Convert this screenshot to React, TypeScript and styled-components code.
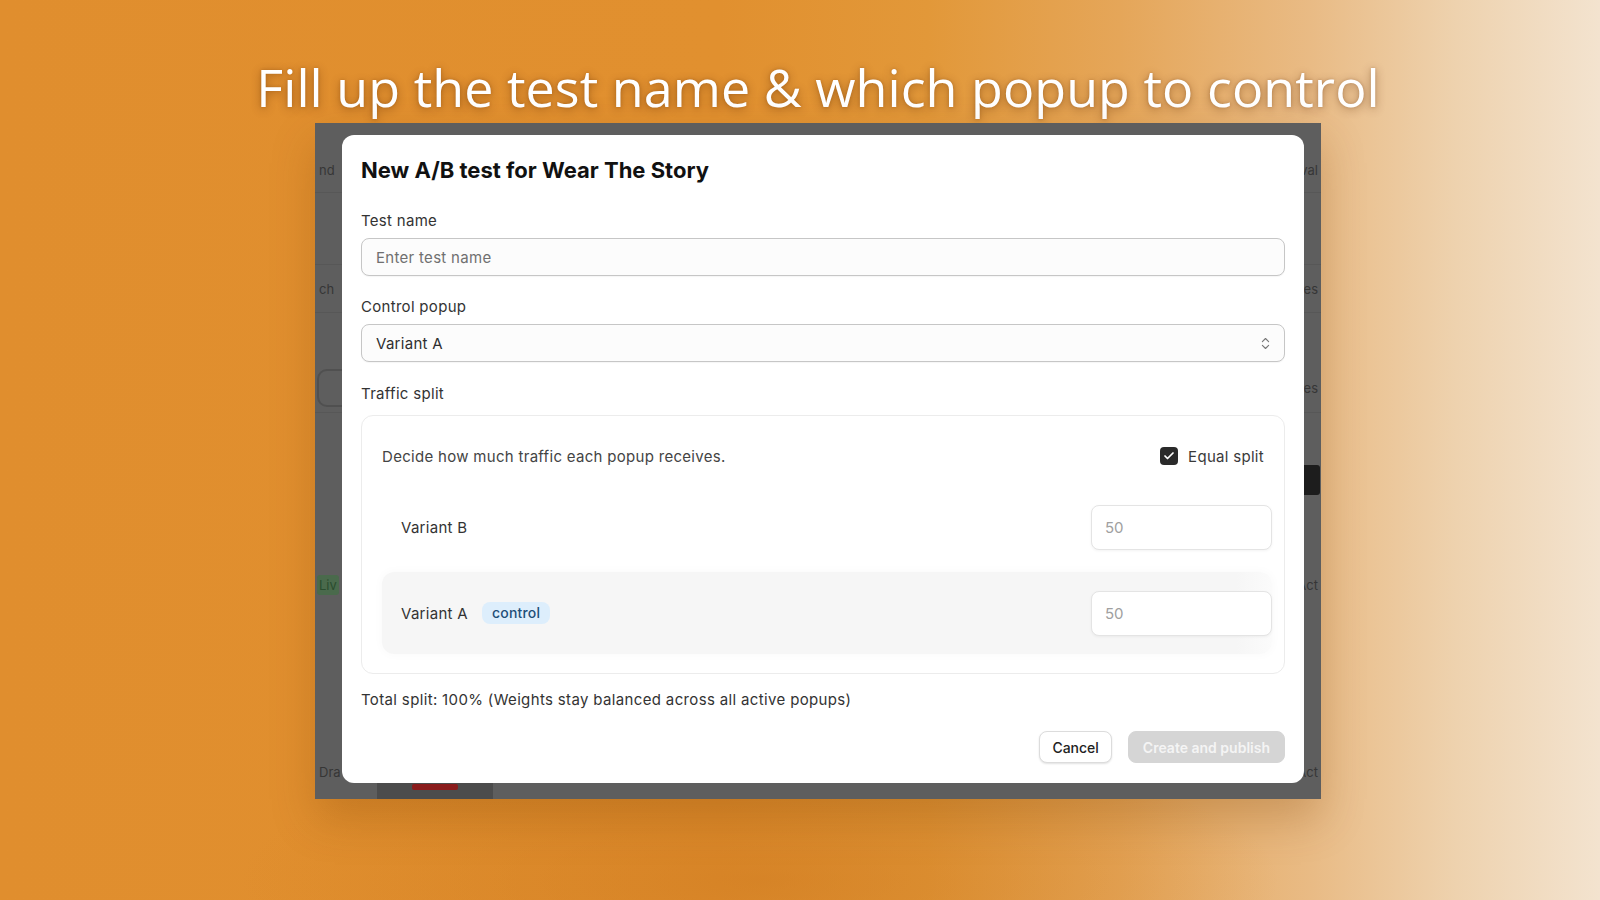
import styled, { createGlobalStyle } from 'styled-components';
import { Check, ChevronsUpDown } from 'lucide-react';

const GlobalStyle = createGlobalStyle`
  html, body {
    margin: 0;
    padding: 0;
  }
  body {
    width: 1600px;
    height: 900px;
    overflow: hidden;
    font-family: Inter, "Liberation Sans", sans-serif;
    background:
      radial-gradient(ellipse 520px 140px at 760px 880px, rgba(205, 120, 30, 0.55), rgba(205, 120, 30, 0) 100%),
      linear-gradient(90deg, #e08e2e 0%, #e1902f 45%, #e29839 58%, #e5a659 70%, #e9bb85 82%, #eed2ae 91%, #f3e3cf 100%);
  }
`;

const Stage = styled.div`
  width: 1600px;
  height: 900px;
  box-sizing: border-box;
  padding: 55px 0 0 36px;
  display: flex;
  flex-direction: column;
  align-items: center;
`;

const Headline = styled.h1`
  margin: 0;
  font-family: "Open Sans", sans-serif;
  font-weight: 400;
  font-size: 52px;
  line-height: 64px;
  letter-spacing: 0.05px;
  color: #ffffff;
  text-shadow: 0 2px 10px rgba(90, 40, 0, 0.45), 0 0 3px rgba(90, 40, 0, 0.25);
  white-space: nowrap;
`;

/* dimmed app screenshot behind the modal */
const Backdrop = styled.div`
  position: relative;
  margin-top: 4px;
  width: 1006px;
  height: 676px;
  background: #5e5e5e;
  overflow: hidden;
  box-shadow: 0 20px 40px rgba(120, 60, 0, 0.25);
`;

const AppTable = styled.div`
  display: flex;
  flex-direction: column;
  padding-top: 24px;
`;

const AppRow = styled.div<{ $h: number; $line?: boolean }>`
  height: ${(p) => p.$h}px;
  flex-shrink: 0;
  box-sizing: border-box;
  padding: 0 1px 0 2px;
  display: flex;
  align-items: center;
  justify-content: space-between;
  border-bottom: ${(p) => (p.$line ? '1px solid #575757' : 'none')};
  font-family: Inter, sans-serif;
  font-size: 13px;
  color: #363636;
`;

const AppCell = styled.span<{ $kind?: 'dark' | 'green' | 'pill' }>`
  min-width: 16px;
  line-height: 20px;
  padding: 0 2px;
  border-radius: ${(p) => (p.$kind === 'pill' ? '10px' : '3px')};
  background: ${(p) =>
    p.$kind === 'dark' ? '#1d1d1d' : p.$kind === 'green' ? '#4a6a4c' : 'transparent'};
  border: ${(p) => (p.$kind === 'pill' ? '2px solid #505050' : 'none')};
  color: ${(p) => (p.$kind === 'green' ? '#2b4d2f' : '#363636')};
  height: ${(p) => (p.$kind === 'dark' ? 30 : p.$kind === 'pill' ? 34 : 20)}px;
  width: ${(p) => (p.$kind === 'pill' ? '30px' : p.$kind === 'dark' ? '14px' : 'auto')};
`;

const BottomTab = styled.div`
  position: absolute;
  left: 62px;
  bottom: 0;
  width: 116px;
  height: 24px;
  box-sizing: border-box;
  padding-bottom: 9px;
  background: #4c4c4c;
  display: flex;
  justify-content: center;
  align-items: flex-end;
`;

const RedMark = styled.span`
  width: 46px;
  height: 6px;
  background: #8a1c1c;
  border-radius: 2px;
`;

const Modal = styled.div`
  position: absolute;
  left: 27px;
  top: 12px;
  width: 962px;
  height: 648px;
  box-sizing: border-box;
  padding: 21px 19px 21px 19px;
  background: #ffffff;
  border-radius: 12px;
  display: flex;
  flex-direction: column;
  font-family: Inter, "Liberation Sans", sans-serif;
  color: #303030;
`;

const Title = styled.h2`
  margin: 0;
  font-size: 22px;
  line-height: 28px;
  font-weight: 700;
  color: #111;
`;

const Field = styled.div<{ $mt: number }>`
  display: flex;
  flex-direction: column;
  gap: 7px;
  margin-top: ${(p) => p.$mt}px;
`;

const Label = styled.label`
  font-size: 15px;
  line-height: 20px;
  letter-spacing: 0.3px;
  color: #333;
`;

const TextBox = styled.div<{ $placeholder?: boolean }>`
  height: 38px;
  box-sizing: border-box;
  border: 1px solid #c6c6c6;
  border-radius: 8px;
  background: #fcfcfc;
  padding: 0 11px 0 14px;
  display: flex;
  align-items: center;
  justify-content: space-between;
  font-size: 15px;
  letter-spacing: 0.3px;
  color: ${(p) => (p.$placeholder ? '#707070' : '#2f2f2f')};
  box-shadow: 0 1px 1px rgba(0, 0, 0, 0.04);
`;

const SplitBox = styled.div`
  margin-top: 11px;
  border: 1px solid #ececec;
  border-radius: 12px;
  padding: 20px 12px 19px 20px;
  display: flex;
  flex-direction: column;
`;

const SplitHeader = styled.div`
  height: 40px;
  margin-right: 8px;
  display: flex;
  align-items: center;
  justify-content: space-between;
  font-size: 15px;
  letter-spacing: 0.3px;
  color: #444;
`;

const CheckLabel = styled.div`
  display: flex;
  align-items: center;
  gap: 10px;
  color: #3a3a3a;
`;

const CheckBox = styled.span`
  width: 18px;
  height: 18px;
  border-radius: 4px;
  background: #2a2a2a;
  display: flex;
  align-items: center;
  justify-content: center;
  color: #fff;
`;

const VariantList = styled.div`
  margin-top: 10px;
  display: flex;
  flex-direction: column;
  gap: 4px;
`;

const VariantRow = styled.div<{ $shaded?: boolean }>`
  height: 82px;
  box-sizing: border-box;
  padding: 0 0 0 19px;
  display: flex;
  align-items: center;
  justify-content: space-between;
  border-radius: 12px;
  background: ${(p) =>
    p.$shaded ? 'linear-gradient(90deg, #f6f6f6 0%, #f6f6f6 96%, #fbfbfb 100%)' : 'transparent'};
  box-shadow: ${(p) => (p.$shaded ? '0 0 8px 2px rgba(0,0,0,0.02)' : 'none')};
`;

const VariantName = styled.div`
  display: flex;
  align-items: center;
  gap: 14px;
  font-size: 15px;
  letter-spacing: 0.3px;
  color: #333;
`;

const Badge = styled.span`
  padding: 2px 10px;
  border-radius: 8px;
  background: #ddeefc;
  color: #1f4f78;
  font-size: 14px;
  font-weight: 500;
  letter-spacing: 0.2px;
  line-height: 18px;
`;

const WeightInput = styled.div`
  width: 181px;
  height: 45px;
  box-sizing: border-box;
  border: 1px solid #e4e4e4;
  border-radius: 8px;
  background: #fff;
  padding: 0 13px;
  display: flex;
  align-items: center;
  font-size: 15px;
  color: #a0a0a0;
  box-shadow: 0 1px 3px rgba(0, 0, 0, 0.05);
`;

const Note = styled.p`
  margin: 16px 0 0;
  font-size: 15px;
  line-height: 20px;
  letter-spacing: 0.35px;
  color: #333;
`;

const Footer = styled.div`
  margin-top: 21px;
  display: flex;
  justify-content: flex-end;
  align-items: center;
  gap: 16px;
`;

const Button = styled.button<{ $primary?: boolean }>`
  height: 32px;
  padding: 0 ${(p) => (p.$primary ? 14 : 12)}px;
  border-radius: 8px;
  border: 1px solid ${(p) => (p.$primary ? '#d5d5d5' : '#dcdcdc')};
  background: ${(p) => (p.$primary ? '#d5d5d5' : '#fff')};
  color: ${(p) => (p.$primary ? '#f4f4f4' : '#222')};
  font-family: Inter, sans-serif;
  font-size: 14px;
  font-weight: ${(p) => (p.$primary ? 600 : 500)};
  box-shadow: ${(p) => (p.$primary ? 'none' : '0 1px 2px rgba(0,0,0,0.12)')};
  cursor: pointer;
`;

type AppRowData = {
  h: number;
  left?: string;
  right?: string;
  line?: boolean;
  leftKind?: 'green' | 'pill';
  rightKind?: 'dark';
};

const appRows: AppRowData[] = [
  { h: 46, left: 'nd', right: 'val', line: true },
  { h: 72, line: true },
  { h: 48, left: 'ch', right: 'ves', line: true },
  { h: 50 },
  { h: 50, left: '', leftKind: 'pill', right: 'les', line: true },
  { h: 42 },
  { h: 50, right: '', rightKind: 'dark' },
  { h: 160, left: 'Liv', leftKind: 'green', right: 'Act' },
  { h: 214, left: 'Dra', right: 'Act' },
];

export default function App() {
  return (
    <>
      <GlobalStyle />
      <Stage>
        <Headline>Fill up the test name &amp; which popup to control</Headline>
        <Backdrop>
          <AppTable>
            {appRows.map((r, i) => (
              <AppRow key={i} $h={r.h} $line={r.line}>
                <AppCell $kind={r.leftKind}>{r.left}</AppCell>
                <AppCell $kind={r.rightKind}>{r.right}</AppCell>
              </AppRow>
            ))}
          </AppTable>
          <BottomTab>
            <RedMark />
          </BottomTab>

          <Modal>
            <Title>New A/B test for Wear The Story</Title>

            <Field $mt={27}>
              <Label>Test name</Label>
              <TextBox $placeholder>Enter test name</TextBox>
            </Field>

            <Field $mt={21}>
              <Label>Control popup</Label>
              <TextBox>
                Variant A
                <ChevronsUpDown size={15} color="#777" strokeWidth={1.8} />
              </TextBox>
            </Field>

            <Field $mt={22}>
              <Label>Traffic split</Label>
            </Field>

            <SplitBox>
              <SplitHeader>
                <span>Decide how much traffic each popup receives.</span>
                <CheckLabel>
                  <CheckBox>
                    <Check size={12} strokeWidth={3.5} />
                  </CheckBox>
                  Equal split
                </CheckLabel>
              </SplitHeader>

              <VariantList>
                <VariantRow>
                  <VariantName>Variant B</VariantName>
                  <WeightInput>50</WeightInput>
                </VariantRow>
                <VariantRow $shaded>
                  <VariantName>
                    Variant A
                    <Badge>control</Badge>
                  </VariantName>
                  <WeightInput>50</WeightInput>
                </VariantRow>
              </VariantList>
            </SplitBox>

            <Note>Total split: 100% (Weights stay balanced across all active popups)</Note>

            <Footer>
              <Button>Cancel</Button>
              <Button $primary>Create and publish</Button>
            </Footer>
          </Modal>
        </Backdrop>
      </Stage>
    </>
  );
}
